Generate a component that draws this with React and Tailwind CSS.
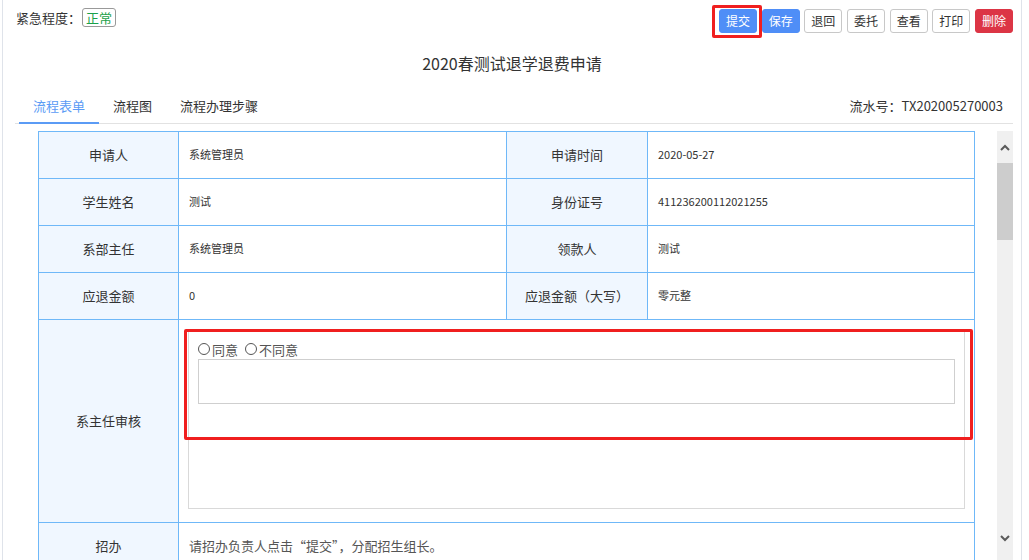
import { useState } from "react";

const FONT = { fontFamily: '"Noto Sans CJK SC", "Noto Sans", "Liberation Sans", sans-serif' };

const BTNS = [
  { label: "提交", kind: "primary", mark: true },
  { label: "保存", kind: "primary" },
  { label: "退回", kind: "plain" },
  { label: "委托", kind: "plain" },
  { label: "查看", kind: "plain" },
  { label: "打印", kind: "plain" },
  { label: "删除", kind: "danger" },
];

const ROWS = [
  ["申请人", "系统管理员", "申请时间", "2020-05-27"],
  ["学生姓名", "测试", "身份证号", "411236200112021255"],
  ["系部主任", "系统管理员", "领款人", "测试"],
  ["应退金额", "0", "应退金额（大写）", "零元整"],
];

function ActionButton({ label, kind, mark }) {
  const cls = {
    primary: "bg-[#4f8ef7] text-white border-[#4f8ef7]",
    plain: "bg-white text-[#333] border-[#c8c8c8]",
    danger: "bg-[#dc3545] text-white border-[#dc3545]",
  }[kind];
  return (
    <div className="relative">
      <button
        type="button"
        className={`w-[38px] h-[24px] rounded-[3px] border text-[12px] leading-none flex items-center justify-center ${cls}`}
      >
        {label}
      </button>
      {mark ? (
        <div className="absolute left-[-7px] top-[-4px] w-[50px] h-[33px] border-[3px] border-[#f01f1f] rounded-[2px] pointer-events-none" />
      ) : null}
    </div>
  );
}

function Label({ children, className = "" }) {
  return (
    <div
      className={`bg-[#f0f7ff] border-r border-b border-[#6fb8f8] flex items-center justify-center text-[13px] text-[#333] ${className}`}
    >
      {children}
    </div>
  );
}

function Value({ children, className = "" }) {
  return (
    <div className={`border-r border-b border-[#6fb8f8] flex items-center pl-[10px] pb-[2px] text-[11px] text-[#333] ${className}`}>
      {children}
    </div>
  );
}

function Radio({ label, checked, onClick }) {
  return (
    <label className="flex items-center gap-[2px] cursor-pointer" onClick={onClick}>
      <span className="w-[12px] h-[12px] rounded-full border border-[#555] flex items-center justify-center">
        {checked ? <span className="w-[6px] h-[6px] rounded-full bg-[#4f8ef7]" /> : null}
      </span>
      <span className="text-[13px] text-[#555] leading-none">{label}</span>
    </label>
  );
}

function Chevron({ up }) {
  return (
    <svg width="10" height="7" viewBox="0 0 10 7">
      <path
        d={up ? "M1 6 L5 2 L9 6" : "M1 1 L5 5 L9 1"}
        fill="none"
        stroke="#5a5a5a"
        strokeWidth="2"
      />
    </svg>
  );
}

export default function App() {
  const [tab, setTab] = useState(0);
  const [opinion, setOpinion] = useState(null);
  const tabs = ["流程表单", "流程图", "流程办理步骤"];

  return (
    <div className="w-[1029px] h-[560px] overflow-hidden bg-white pl-[2px]" style={FONT}>
      <div className="w-[1020px] h-full border-l border-r border-[#dfe3ea] flex flex-col">
        {/* 顶部：紧急程度 + 操作按钮 */}
        <div className="h-[33px] flex justify-between items-start pl-[13px] pr-[8px]">
          <div className="mt-[8px] h-[19px] flex items-center text-[13px] text-[#333]">
            <span>紧急程度：</span>
            <span className="ml-[1px] h-[19px] px-[3px] border border-[#999] rounded-[3px] text-[13px] text-[#1aa14a] flex items-center leading-none">
              正常
            </span>
          </div>
          <div className="mt-[9px] flex gap-[4.67px]">
            {BTNS.map((b) => (
              <ActionButton key={b.label} {...b} />
            ))}
          </div>
        </div>

        {/* 标题 */}
        <div className="mt-[18px] h-[24px] flex items-center justify-center text-[16px] text-[#333]">
          2020春测试退学退费申请
        </div>

        {/* 选项卡 */}
        <div className="mt-[14px] ml-[12px] mr-[8px] flex items-end justify-between border-b border-[#e2e2e2]">
          <div className="flex ml-[4px]">
            {tabs.map((t, i) => (
              <button
                key={t}
                type="button"
                onClick={() => setTab(i)}
                className={[
                  "h-[34px] px-[14px] text-[13px] border-b-2 mb-[-1px]",
                  tab === i ? "text-[#5b9bf5] border-[#5b9bf5]" : "text-[#333] border-transparent",
                ].join(" ")}
              >
                {t}
              </button>
            ))}
          </div>
          <div className="h-[34px] flex items-center pr-[10px] text-[13px] text-[#333]">
            流水号：TX202005270003
          </div>
        </div>

        {/* 表单区 + 滚动条 */}
        <div className="flex-1 min-h-0 ml-[12px] mr-[8px] pt-[7px] flex">
          <div className="flex-1 min-w-0 pl-[23px] overflow-hidden">
            <div className="w-[937px] border-l border-t border-[#6fb8f8] grid grid-cols-[140px_328px_141px_327px]">
              {ROWS.map((r) => (
                <div key={r[0]} className="contents">
                  <Label className="h-[47px]">{r[0]}</Label>
                  <Value className="h-[47px]">{r[1]}</Value>
                  <Label className="h-[47px]">{r[2]}</Label>
                  <Value className="h-[47px]">{r[3]}</Value>
                </div>
              ))}

              <Label className="h-[203px]">系主任审核</Label>
              <div className="col-span-3 h-[203px] border-r border-b border-[#6fb8f8] relative pt-[11px] pb-[13px] px-[9px]">
                <div className="h-full border border-[#d9d9d9] px-[9px] pt-[8px] flex flex-col">
                  <div className="h-[18px] flex items-center gap-[7px]">
                    <Radio label="同意" checked={opinion === 1} onClick={() => setOpinion(1)} />
                    <Radio label="不同意" checked={opinion === 2} onClick={() => setOpinion(2)} />
                  </div>
                  <textarea className="mt-[1px] h-[45px] w-full border border-[#cfcfcf] resize-none outline-none text-[12px] p-1" />
                </div>
                <div className="absolute left-[5px] top-[9px] w-[789px] h-[111px] border-[3px] border-[#f01f1f] rounded-[2px] pointer-events-none" />
              </div>

              <Label className="h-[47px]">招办</Label>
              <div className="col-span-3 h-[47px] border-r border-b border-[#6fb8f8] flex items-center pl-[10px] text-[13px] text-[#555]">
                请招办负责人点击“提交”，分配招生组长。
              </div>
            </div>
          </div>

          {/* 滚动条 */}
          <div className="w-[16px] bg-[#f0f0f0] flex flex-col items-center">
            <div className="h-[32px] flex items-center justify-center">
              <Chevron up />
            </div>
            <div className="w-full h-[77px] bg-[#cdcdcd]" />
            <div className="flex-1" />
            <div className="h-[26px] flex items-start justify-center pt-[1px]">
              <Chevron />
            </div>
          </div>
        </div>
      </div>
    </div>
  );
}
